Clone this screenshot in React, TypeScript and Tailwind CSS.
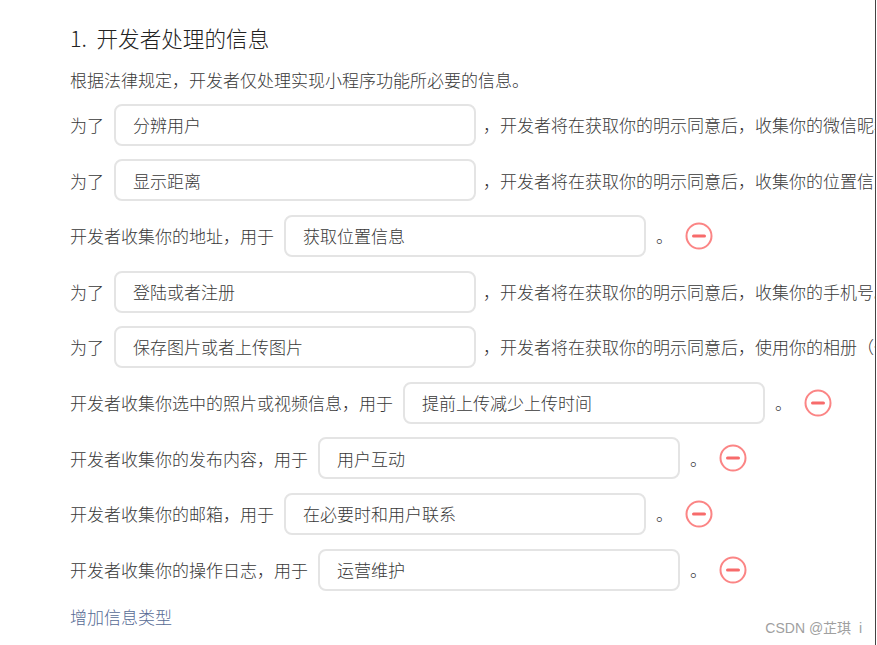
import type { ReactNode } from "react";

const FONT = { fontFamily: '"Noto Sans CJK SC", "Noto Sans", sans-serif' };

type Row =
  | { kind: "purpose"; value: string; tail: string }
  | { kind: "collect"; label: string; value: string };

const ROWS: Row[] = [
  { kind: "purpose", value: "分辨用户", tail: "，开发者将在获取你的明示同意后，收集你的微信昵称、头像。" },
  { kind: "purpose", value: "显示距离", tail: "，开发者将在获取你的明示同意后，收集你的位置信息。" },
  { kind: "collect", label: "开发者收集你的地址，用于", value: "获取位置信息" },
  { kind: "purpose", value: "登陆或者注册", tail: "，开发者将在获取你的明示同意后，收集你的手机号。" },
  { kind: "purpose", value: "保存图片或者上传图片", tail: "，开发者将在获取你的明示同意后，使用你的相册（仅写入）权限。" },
  { kind: "collect", label: "开发者收集你选中的照片或视频信息，用于", value: "提前上传减少上传时间" },
  { kind: "collect", label: "开发者收集你的发布内容，用于", value: "用户互动" },
  { kind: "collect", label: "开发者收集你的邮箱，用于", value: "在必要时和用户联系" },
  { kind: "collect", label: "开发者收集你的操作日志，用于", value: "运营维护" },
];

function Field({ children }: { children: ReactNode }) {
  return (
    <div className="ml-[10px] flex h-[42px] w-[362px] shrink-0 items-center rounded-[8px] border-2 border-[#e4e4e4] pl-[17px]">
      {children}
    </div>
  );
}

function MinusIcon() {
  return (
    <svg width="28" height="28" viewBox="0 0 28 28" className="ml-[12px] shrink-0">
      <circle cx="14" cy="14" r="12.5" fill="none" stroke="#fb8585" strokeWidth="2" />
      <line x1="8.5" y1="14" x2="19.5" y2="14" stroke="#f76b6b" strokeWidth="3" strokeLinecap="round" />
    </svg>
  );
}

export default function App() {
  return (
    <div className="flex h-[645px] w-[877px] overflow-hidden bg-white text-[17px] font-light text-[#383838]" style={FONT}>
      <div className="relative h-full w-[875px] shrink-0 overflow-hidden pl-[70px] pt-[25px]">
        <h1 className="text-[21.6px] leading-[26px] whitespace-nowrap text-[#222]">1.&nbsp; 开发者处理的信息</h1>
        <p className="mt-[17px] leading-[24px] whitespace-nowrap">根据法律规定，开发者仅处理实现小程序功能所必要的信息。</p>

        <div className="mt-[5px] flex flex-col">
          {ROWS.map((row, i) => (
            <div key={i} className="flex h-[55.6px] items-center whitespace-nowrap">
              {row.kind === "purpose" ? (
                <>
                  <span className="shrink-0">为了</span>
                  <Field>{row.value}</Field>
                  <span className="ml-[7px] shrink-0">{row.tail}</span>
                </>
              ) : (
                <>
                  <span className="shrink-0">{row.label}</span>
                  <Field>{row.value}</Field>
                  <span className="ml-[10px] shrink-0">。</span>
                  <MinusIcon />
                </>
              )}
            </div>
          ))}
        </div>

        <button className="mt-[8px] block leading-[24px] text-[#576b95]">增加信息类型</button>

        <div className="absolute right-[13px] bottom-[8px] text-[14px] leading-[18px] font-normal text-[#a0a0a0]" style={{ fontFamily: '"Liberation Sans", "Noto Sans CJK SC", sans-serif' }}>
          CSDN @芷琪&nbsp; i
        </div>
      </div>
      <div className="h-full w-px shrink-0 bg-[#444]" />
      <div className="h-full flex-1 bg-white" />
    </div>
  );
}
